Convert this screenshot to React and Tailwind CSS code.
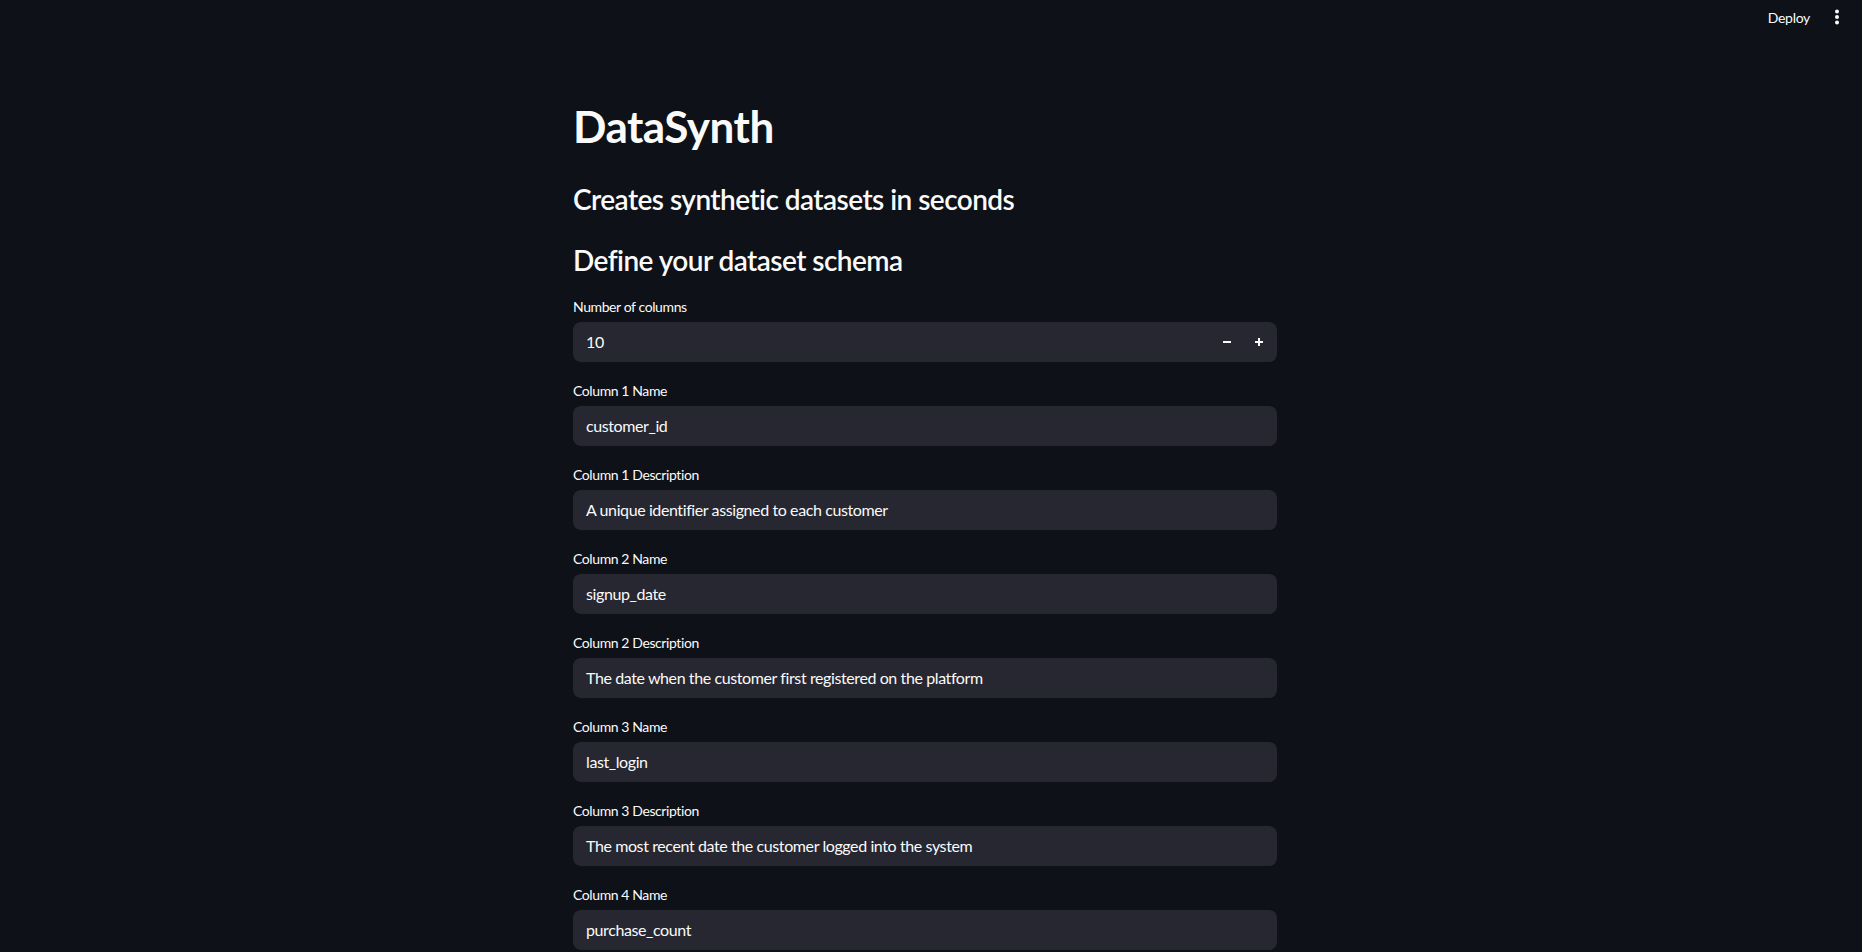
const fields = [
  { label: 'Column 1 Name', value: 'customer_id' },
  { label: 'Column 1 Description', value: 'A unique identifier assigned to each customer' },
  { label: 'Column 2 Name', value: 'signup_date' },
  { label: 'Column 2 Description', value: 'The date when the customer first registered on the platform' },
  { label: 'Column 3 Name', value: 'last_login' },
  { label: 'Column 3 Description', value: 'The most recent date the customer logged into the system' },
  { label: 'Column 4 Name', value: 'purchase_count' },
];

const Field = ({ label, children }) => (
  <div className="flex flex-col">
    <label className="h-[24px] mb-[4px] flex items-center text-[14px] tracking-[-0.4px] text-[#fafafa]">{label}</label>
    {children}
  </div>
);

const App = () => {
  return (
    <div className="h-screen overflow-hidden bg-[#0e1117] text-[#fafafa]" style={{ fontFamily: 'Lato, "Noto Sans", sans-serif' }}>
      <header className="h-[60px] flex items-start justify-end pt-[5px] pr-[20px] gap-[22px]">
        <button className="h-[24px] text-[14px] tracking-[-0.3px] text-[#fafafa]">Deploy</button>
        <button className="h-[24px] w-[10px] flex items-center justify-center">
          <svg width="6" height="16" viewBox="0 0 6 16" fill="#fafafa">
            <circle cx="3" cy="2.5" r="2" />
            <circle cx="3" cy="8" r="2" />
            <circle cx="3" cy="13.5" r="2" />
          </svg>
        </button>
      </header>

      <main className="flex justify-center pr-[12px]">
        <div className="w-[704px] flex flex-col">
          <h1 className="mt-[40px] text-[44px] leading-[52px] font-bold tracking-[-0.5px]">DataSynth</h1>
          <h3 className="mt-[30px] text-[28px] leading-[34px] font-semibold tracking-[-0.55px]">Creates synthetic datasets in seconds</h3>
          <h3 className="mt-[27px] text-[28px] leading-[34px] font-semibold tracking-[-0.55px]">Define your dataset schema</h3>

          <div className="mt-[17px] flex flex-col gap-[16px] text-[16px] tracking-[-0.4px]">
            <Field label="Number of columns">
              <div className="h-[40px] rounded-lg bg-[#262730] flex items-center">
                <span className="flex-1 pl-[13px]">10</span>
                <button className="w-[32px] h-full flex items-center justify-center">
                  <svg width="10" height="10" viewBox="0 0 10 10"><rect x="1" y="4" width="8" height="2" fill="#fafafa" /></svg>
                </button>
                <button className="w-[32px] h-full flex items-center justify-center mr-[2px]">
                  <svg width="10" height="10" viewBox="0 0 10 10"><rect x="1" y="4" width="8" height="2" fill="#fafafa" /><rect x="4" y="1" width="2" height="8" fill="#fafafa" /></svg>
                </button>
              </div>
            </Field>
            {fields.map((f) => (
              <Field key={f.label} label={f.label}>
                <div className="h-[40px] rounded-lg bg-[#262730] flex items-center pl-[13px]">{f.value}</div>
              </Field>
            ))}
          </div>
        </div>
      </main>
    </div>
  );
};

export default App;
